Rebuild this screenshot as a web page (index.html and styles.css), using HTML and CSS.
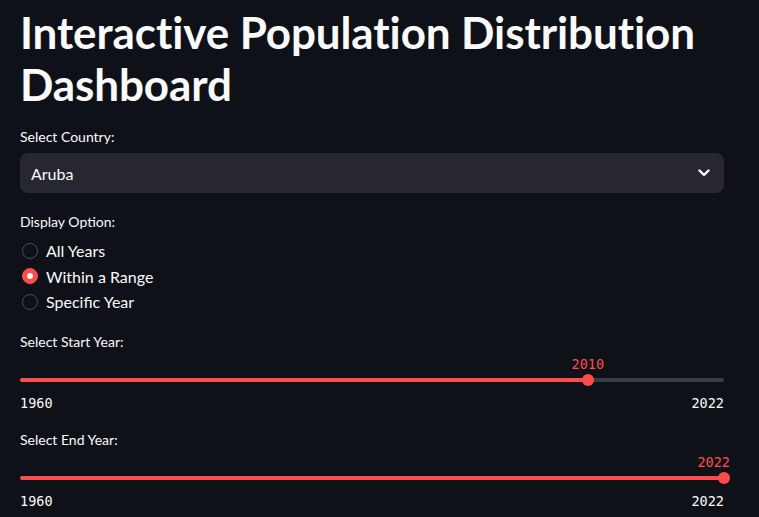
FILE: index.html
```html
<!DOCTYPE html>
<html lang="en">
<head>
<meta charset="utf-8">
<title>Interactive Population Distribution Dashboard</title>
<link rel="stylesheet" href="styles.css">
</head>
<body>
<main class="main">
  <h1 class="title">Interactive Population Distribution Dashboard</h1>

  <section class="widget widget-select">
    <label class="label">Select Country:</label>
    <div class="select">
      <span class="select-value">Aruba</span>
      <svg class="chevron" width="12" height="8" viewBox="0 0 12 8"><path d="M1.5 1.5 L6 6 L10.5 1.5" fill="none" stroke="#fafafa" stroke-width="2.4" stroke-linecap="round" stroke-linejoin="round"/></svg>
    </div>
  </section>

  <section class="widget widget-radio">
    <label class="label">Display Option:</label>
    <div class="radios">
      <div class="radio"><span class="dot"></span><span>All Years</span></div>
      <div class="radio checked"><span class="dot"></span><span>Within a Range</span></div>
      <div class="radio"><span class="dot"></span><span>Specific Year</span></div>
    </div>
  </section>

  <section class="widget widget-slider">
    <label class="label">Select Start Year:</label>
    <div class="slider">
      <div class="track">
        <div class="fill" style="width: 80.65%"></div>
        <div class="thumb" style="left: 80.65%"><span class="value">2010</span></div>
      </div>
    </div>
    <div class="ticks"><span>1960</span><span>2022</span></div>
  </section>

  <section class="widget widget-slider">
    <label class="label">Select End Year:</label>
    <div class="slider">
      <div class="track">
        <div class="fill" style="width: 100%"></div>
        <div class="thumb" style="left: 100%"><span class="value value-end">2022</span></div>
      </div>
    </div>
    <div class="ticks"><span>1960</span><span>2022</span></div>
  </section>
</main>
</body>
</html>
```

FILE: styles.css
```css
* { box-sizing: border-box; }
html, body {
  margin: 0;
  padding: 0;
  background: #0e1117;
  color: #fafafa;
  font-family: Lato, "Open Sans", "Noto Sans", sans-serif;
  height: 100%;
  overflow: hidden;
}
.main {
  width: 704px;
  margin-left: 20px;
  padding-top: 6px;
  display: flex;
  flex-direction: column;
}
.title {
  margin: 0;
  font-size: 44px;
  font-weight: 700;
  line-height: 52px;
  letter-spacing: -0.1px;
}
.label {
  display: block;
  font-size: 14px;
  line-height: 20px;
  color: #fafafa;
}
.widget-select { margin-top: 17px; }
.widget-select .label { margin-bottom: 6px; }
.select {
  height: 40px;
  background: #262730;
  border-radius: 8px;
  display: flex;
  align-items: center;
  justify-content: space-between;
  padding: 0 14px 0 11px;
  font-size: 16px;
}
.chevron { display: block; }

.widget-radio { margin-top: 19px; }
.radios {
  display: flex;
  flex-direction: column;
  margin-top: 6px;
}
.radio {
  display: flex;
  align-items: center;
  gap: 8px;
  height: 25.5px;
  font-size: 16px;
}
.dot {
  width: 16px;
  height: 16px;
  border-radius: 50%;
  border: 1px solid #4b4d56;
  margin-left: 2px;
  display: flex;
  align-items: center;
  justify-content: center;
}
.radio.checked .dot {
  background: #ff4b4b;
  border-color: #ff4b4b;
}
.radio.checked .dot::after {
  content: "";
  width: 6px;
  height: 6px;
  border-radius: 50%;
  background: #fafafa;
}

.widget-slider { margin-top: 17px; }
.widget-slider + .widget-slider { margin-top: 19px; }
.slider {
  padding-top: 26px;
  padding-bottom: 13px;
}
.track {
  position: relative;
  height: 4px;
  border-radius: 2px;
  background: #3a3c45;
}
.fill {
  height: 4px;
  border-radius: 2px;
  background: #ff4b4b;
}
.thumb {
  position: absolute;
  top: -4px;
  width: 12px;
  height: 12px;
  margin-left: -6px;
  border-radius: 50%;
  background: #ff4b4b;
}
.value {
  position: absolute;
  bottom: 14px;
  left: 50%;
  transform: translateX(-50%);
  font-family: "DejaVu Sans Mono", "Liberation Mono", monospace;
  font-size: 13.5px;
  line-height: 16px;
  color: #ff4b4b;
}
.value-end {
  left: auto;
  right: 0;
  transform: none;
}
.ticks {
  display: flex;
  justify-content: space-between;
  font-family: "DejaVu Sans Mono", "Liberation Mono", monospace;
  font-size: 13.5px;
  line-height: 16px;
  color: #fafafa;
}
```
